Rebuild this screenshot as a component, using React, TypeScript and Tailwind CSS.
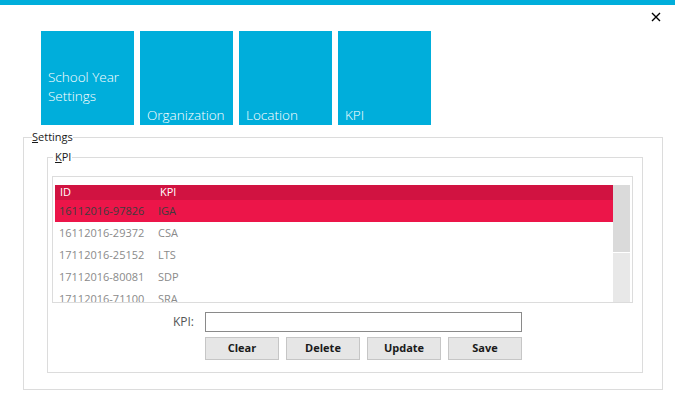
const tiles = [
  { label: 'School Year Settings', pos: 'pb-[19px] leading-[19px]' },
  { label: 'Organization', pos: 'pb-[1px] leading-[17px]' },
  { label: 'Location', pos: 'pb-[1px] leading-[17px]' },
  { label: 'KPI', pos: 'pb-[1px] leading-[17px]' },
];

const rows = [
  { id: '16112016-97826', kpi: 'IGA', selected: true },
  { id: '16112016-29372', kpi: 'CSA' },
  { id: '17112016-25152', kpi: 'LTS' },
  { id: '17112016-80081', kpi: 'SDP' },
  { id: '17112016-71100', kpi: 'SRA' },
];

const buttons = ['Clear', 'Delete', 'Update', 'Save'];

export default function App() {
  return (
    <div className="w-[675px] h-[401px] bg-white overflow-hidden font-['Open_Sans','Segoe_UI',sans-serif] text-[11px]">
      {/* Title bar accent */}
      <div className="h-[5px] bg-[#00aedb]" />

      <div className="flex justify-end h-[26px] pt-[7px] pr-[14px]">
        <button className="w-[10px] h-[10px]" aria-label="Close">
          <svg width="10" height="10" viewBox="0 0 10 10">
            <path d="M1 1 L9 9 M9 1 L1 9" stroke="#000" strokeWidth="1.4" />
          </svg>
        </button>
      </div>

      {/* Navigation tiles */}
      <div className="flex gap-[6px] ml-[41px]">
        {tiles.map((t) => (
          <div
            key={t.label}
            className={`w-[93px] h-[94px] bg-[#00aedb] text-white flex flex-col justify-end pl-[7px] pr-[6px] ${t.pos} text-[13.5px] font-light`}
          >
            {t.label}
          </div>
        ))}
      </div>

      {/* Settings group */}
      <fieldset className="mt-[5px] ml-[23px] w-[640px] border border-[#dcdcdc]">
        <legend className="ml-[8px] leading-[14px] text-[#1a1a1a]">
          <span className="underline">S</span>ettings
        </legend>
        <div className="pt-[6px] pl-[23px] pr-[19px] pb-[16px]">
          <fieldset className="w-[596px] border border-[#dcdcdc]">
            <legend className="ml-[5px] pl-[2px] pr-[1px] leading-[14px] text-[#1a1a1a]">
              <span className="underline">K</span>PI
            </legend>
            <div className="pt-[12px] pl-[4px] pr-[9px] pb-[12px]">
              {/* List view */}
              <div className="w-[581px] h-[127px] border border-[#dcdcdc] pt-[8px] pl-[2px] pr-[2px]">
                <div className="flex h-[117px] overflow-hidden">
                  <div className="flex-1">
                    <div className="flex items-center h-[15px] bg-[#d11341] text-white">
                      <span className="w-[103px] pl-[5px]">ID</span>
                      <span className="pl-[2px]">KPI</span>
                    </div>
                    {rows.map((r) => (
                      <div
                        key={r.id}
                        className={`flex items-center h-[22px] ${r.selected ? 'bg-[#ec1549] text-[#3d3d3d]' : 'text-[#8a8a8a]'}`}
                      >
                        <span className="w-[103px] pl-[4px]">{r.id}</span>
                        <span>{r.kpi}</span>
                      </div>
                    ))}
                  </div>
                  <div className="w-[17px] flex flex-col gap-[1px]">
                    <div className="h-[67px] bg-[#dadada]" />
                    <div className="flex-1 bg-[#e8e8e8]" />
                  </div>
                </div>
              </div>

              {/* Editor */}
              <div className="grid grid-cols-[142px_317px] gap-x-[11px] mt-[9px]">
                <label className="text-right self-center text-[#555] text-[12px]">KPI:</label>
                <input className="h-[20px] border border-[#8a8a8a] bg-white px-[3px] outline-none" />
                <div />
                <div className="flex gap-[7px] mt-[5px]">
                  {buttons.map((b) => (
                    <button
                      key={b}
                      className="w-[74px] h-[23px] bg-[#e6e6e6] border border-[#c6c6c6] font-bold text-[#1a1a1a]"
                    >
                      {b}
                    </button>
                  ))}
                </div>
              </div>
            </div>
          </fieldset>
        </div>
      </fieldset>
    </div>
  );
}
